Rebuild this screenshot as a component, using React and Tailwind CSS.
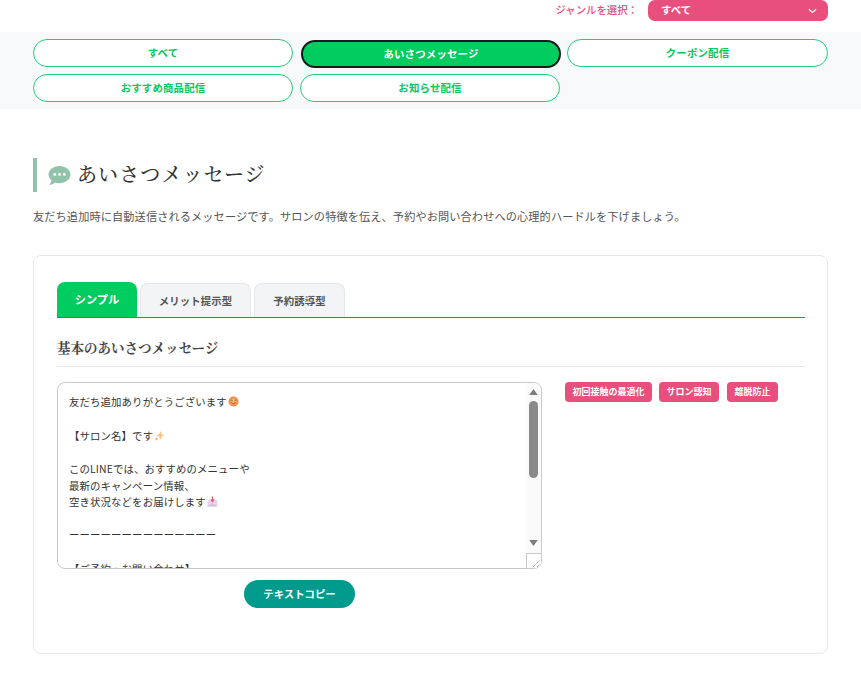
import React from "react";

const Btn = ({ children, active }) => (
  <button
    className={
      active
        ? "h-7 rounded-full bg-[#00cc60] border-2 border-[#1a1a1a] text-white text-[10.4px] tracking-[0.2px] font-bold translate-x-px translate-y-px"
        : "h-7 rounded-full bg-white border border-[#1fcf78] text-[#00c95f] text-[10.4px] tracking-[0.2px] font-bold"
    }
  >
    {children}
  </button>
);

const Smile = () => (
  <svg viewBox="0 0 12 12" className="inline-block w-[11px] h-[11px] ml-px align-[-1px]">
    <circle cx="6" cy="6" r="5.5" fill="#f08a45" />
    <circle cx="6" cy="6" r="3.6" fill="#f6ae6a" />
    <path d="M2.8 5 Q3.8 3.8 4.8 5 M7.2 5 Q8.2 3.8 9.2 5" stroke="#7a4a2a" strokeWidth="0.8" fill="none" />
    <path d="M3.4 7.2 Q6 10 8.6 7.2" stroke="#b5432e" strokeWidth="0.9" fill="none" />
  </svg>
);
const Sparkle = () => (
  <svg viewBox="0 0 12 12" className="inline-block w-[11px] h-[11px] ml-px align-[-1px]">
    <path d="M7 1 L8.2 4.6 L11.5 5.8 L8.2 7 L7 10.6 L5.8 7 L2.5 5.8 L5.8 4.6 Z" fill="#fbbf7e" />
    <path d="M2.8 7.6 L3.4 9.2 L5 9.8 L3.4 10.4 L2.8 12 L2.2 10.4 L0.6 9.8 L2.2 9.2 Z" fill="#f7a468" />
  </svg>
);
const Inbox = () => (
  <svg viewBox="0 0 12 12" className="inline-block w-[11px] h-[11px] ml-px align-[-1px]">
    <path d="M0.5 5 L6 3 L11.5 5 V11.5 H0.5 Z" fill="#e6d6ea" />
    <path d="M0.5 11.5 L6 7.5 L11.5 11.5 Z" fill="#d7c3df" />
    <path d="M6 0.5 V5.5 M4.2 3.8 L6 6 L7.8 3.8" stroke="#e5566f" strokeWidth="1.3" fill="none" />
  </svg>
);

const Line = ({ children }) => <div className="h-[16.64px] leading-[16.64px] whitespace-pre">{children || " "}</div>;

export default function App() {
  return (
    <div className="min-h-[686px] bg-white text-[#333] font-['Noto_Sans_CJK_JP','Noto_Sans',sans-serif]">
      <div className="h-8 flex justify-end items-start pr-[33px] gap-[10px]">
        <span className="text-[10.4px] leading-[20px] font-medium text-[#e94f7c]">ジャンルを選択：</span>
        <div className="w-[180px] h-[21px] rounded-[7px] bg-[#e94f7c] flex items-center justify-between pl-[13px] pr-[11px] text-white text-[10.4px] font-bold">
          <span className="-translate-y-px">すべて</span>
          <svg viewBox="0 0 10 6" className="w-[9px] h-[6px]">
            <path d="M1 1 L5 4.6 L9 1" stroke="#fff" strokeWidth="1.3" fill="none" />
          </svg>
        </div>
      </div>

      <div className="h-[77px] bg-[#f8f9fb] px-[33px] pt-[7px]">
        <div className="grid grid-cols-[260px_260px_261px] gap-x-[7px] gap-y-[7px]">
          <Btn>すべて</Btn>
          <Btn active>あいさつメッセージ</Btn>
          <Btn>クーポン配信</Btn>
          <Btn>おすすめ商品配信</Btn>
          <Btn>お知らせ配信</Btn>
        </div>
      </div>

      <div className="px-[33px] pt-[49px]">
        <div className="h-[34px] border-l-4 border-[#93c2aa] pl-[11px] flex items-center gap-[6px]">
          <svg viewBox="0 0 24 22" className="w-[23px] h-[21px]">
            <path d="M12 1 C18.4 1 23.5 4.9 23.5 10 C23.5 15.1 18.4 19 12 19 C10.4 19 8.9 18.8 7.6 18.3 C5.6 19.8 3.4 20.7 1 21 C2.4 19.5 3.4 17.7 3.6 15.9 C1.6 14.4 0.5 12.3 0.5 10 C0.5 4.9 5.6 1 12 1 Z" fill="#93c2aa" />
            <circle cx="7" cy="10" r="1.5" fill="#fff" />
            <circle cx="12" cy="10" r="1.5" fill="#fff" />
            <circle cx="17" cy="10" r="1.5" fill="#fff" />
          </svg>
          <h1 className="text-[20px] tracking-[1.1px] font-medium text-[#333] -translate-y-px font-['Noto_Serif_CJK_JP','Liberation_Serif','Noto_Sans_CJK_JP',serif]">
            あいさつメッセージ
          </h1>
        </div>
        <p className="mt-[15px] text-[11.2px] tracking-[0.1px] leading-[18px] text-[#555]">
          友だち追加時に自動送信されるメッセージです。サロンの特徴を伝え、予約やお問い合わせへの心理的ハードルを下げましょう。
        </p>

        <div className="mt-[30px] h-[399px] rounded-lg border border-[#e5e7eb] pl-[23px] pr-[22px] pt-[26px]">
          <div className="flex items-end gap-[3px] border-b border-[#009b8d] h-[36px]">
            <div className="w-[80px] h-[35px] rounded-t-lg bg-[#00cc60] text-white text-[11.2px] font-bold flex items-center justify-center">シンプル</div>
            <div className="w-[111px] h-[34px] rounded-t-lg bg-[#f3f4f6] border border-b-0 border-[#e5e7eb] text-[#555] text-[10.4px] tracking-[0.1px] font-bold flex items-center justify-center">メリット提示型</div>
            <div className="w-[91px] h-[34px] rounded-t-lg bg-[#f3f4f6] border border-b-0 border-[#e5e7eb] text-[#555] text-[10.4px] tracking-[0.1px] font-bold flex items-center justify-center">予約誘導型</div>
          </div>

          <h2 className="mt-[18px] h-[31px] border-b border-[#e5e7eb] text-[13.5px] leading-[22px] font-bold text-[#444] font-['Noto_Serif_CJK_JP','Liberation_Serif','Noto_Sans_CJK_JP',serif]">
            基本のあいさつメッセージ
          </h2>

          <div className="mt-[15px] flex gap-[23px]">
            <div className="w-[485px] shrink-0">
              <div className="relative h-[187px] rounded-lg border border-[#c9c9c9] overflow-hidden pl-[11px] pt-[11.4px] text-[10.4px] tracking-[0.13px] text-[#333]">
                <Line>友だち追加ありがとうございます<Smile /></Line>
                <Line />
                <Line>【サロン名】です<Sparkle /></Line>
                <Line />
                <Line>このLINEでは、おすすめのメニューや</Line>
                <Line>最新のキャンペーン情報、</Line>
                <Line>空き状況などをお届けします<Inbox /></Line>
                <Line />
                <Line>ーーーーーーーーーーーーーー</Line>
                <Line />
                <Line>【ご予約・お問い合わせ】</Line>

                <div className="absolute top-0 bottom-0 right-0 w-[15px] bg-[#fafafa]">
                  <svg viewBox="0 0 10 7" className="absolute top-[6px] left-[3px] w-[9px] h-[6px]">
                    <path d="M5 0 L10 7 H0 Z" fill="#7d7d7d" />
                  </svg>
                  <div className="absolute top-[18px] left-[3px] w-[9px] h-[77px] rounded-full bg-[#8a8a8a]" />
                  <svg viewBox="0 0 10 7" className="absolute top-[157px] left-[3px] w-[9px] h-[6px]">
                    <path d="M0 0 H10 L5 7 Z" fill="#7d7d7d" />
                  </svg>
                  <div className="absolute bottom-0 right-0 w-[15px] h-[15px] bg-white border-l border-t border-[#c9c9c9]">
                    <svg viewBox="0 0 14 14" className="absolute inset-0 w-[14px] h-[14px]">
                      <path d="M6 13 L13 6 M10 13 L13 10" stroke="#555" strokeWidth="0.8" strokeDasharray="1 1" fill="none" />
                    </svg>
                  </div>
                </div>
              </div>
              <div className="mt-[11px] flex justify-center">
                <button className="w-[111px] h-7 rounded-full bg-[#009b8d] text-white text-[10.4px] font-bold">テキストコピー</button>
              </div>
            </div>

            <div className="flex items-start">
              <span className="h-5 w-[87px] rounded-[4px] bg-[#e94f7c] text-white text-[9px] font-bold flex items-center justify-center">初回接触の最適化</span>
              <span className="ml-[7px] h-5 w-[60px] rounded-[4px] bg-[#e94f7c] text-white text-[9px] font-bold flex items-center justify-center">サロン認知</span>
              <span className="ml-[8px] h-5 w-[51px] rounded-[4px] bg-[#e94f7c] text-white text-[9px] font-bold flex items-center justify-center">離脱防止</span>
            </div>
          </div>
        </div>
      </div>
    </div>
  );
}
